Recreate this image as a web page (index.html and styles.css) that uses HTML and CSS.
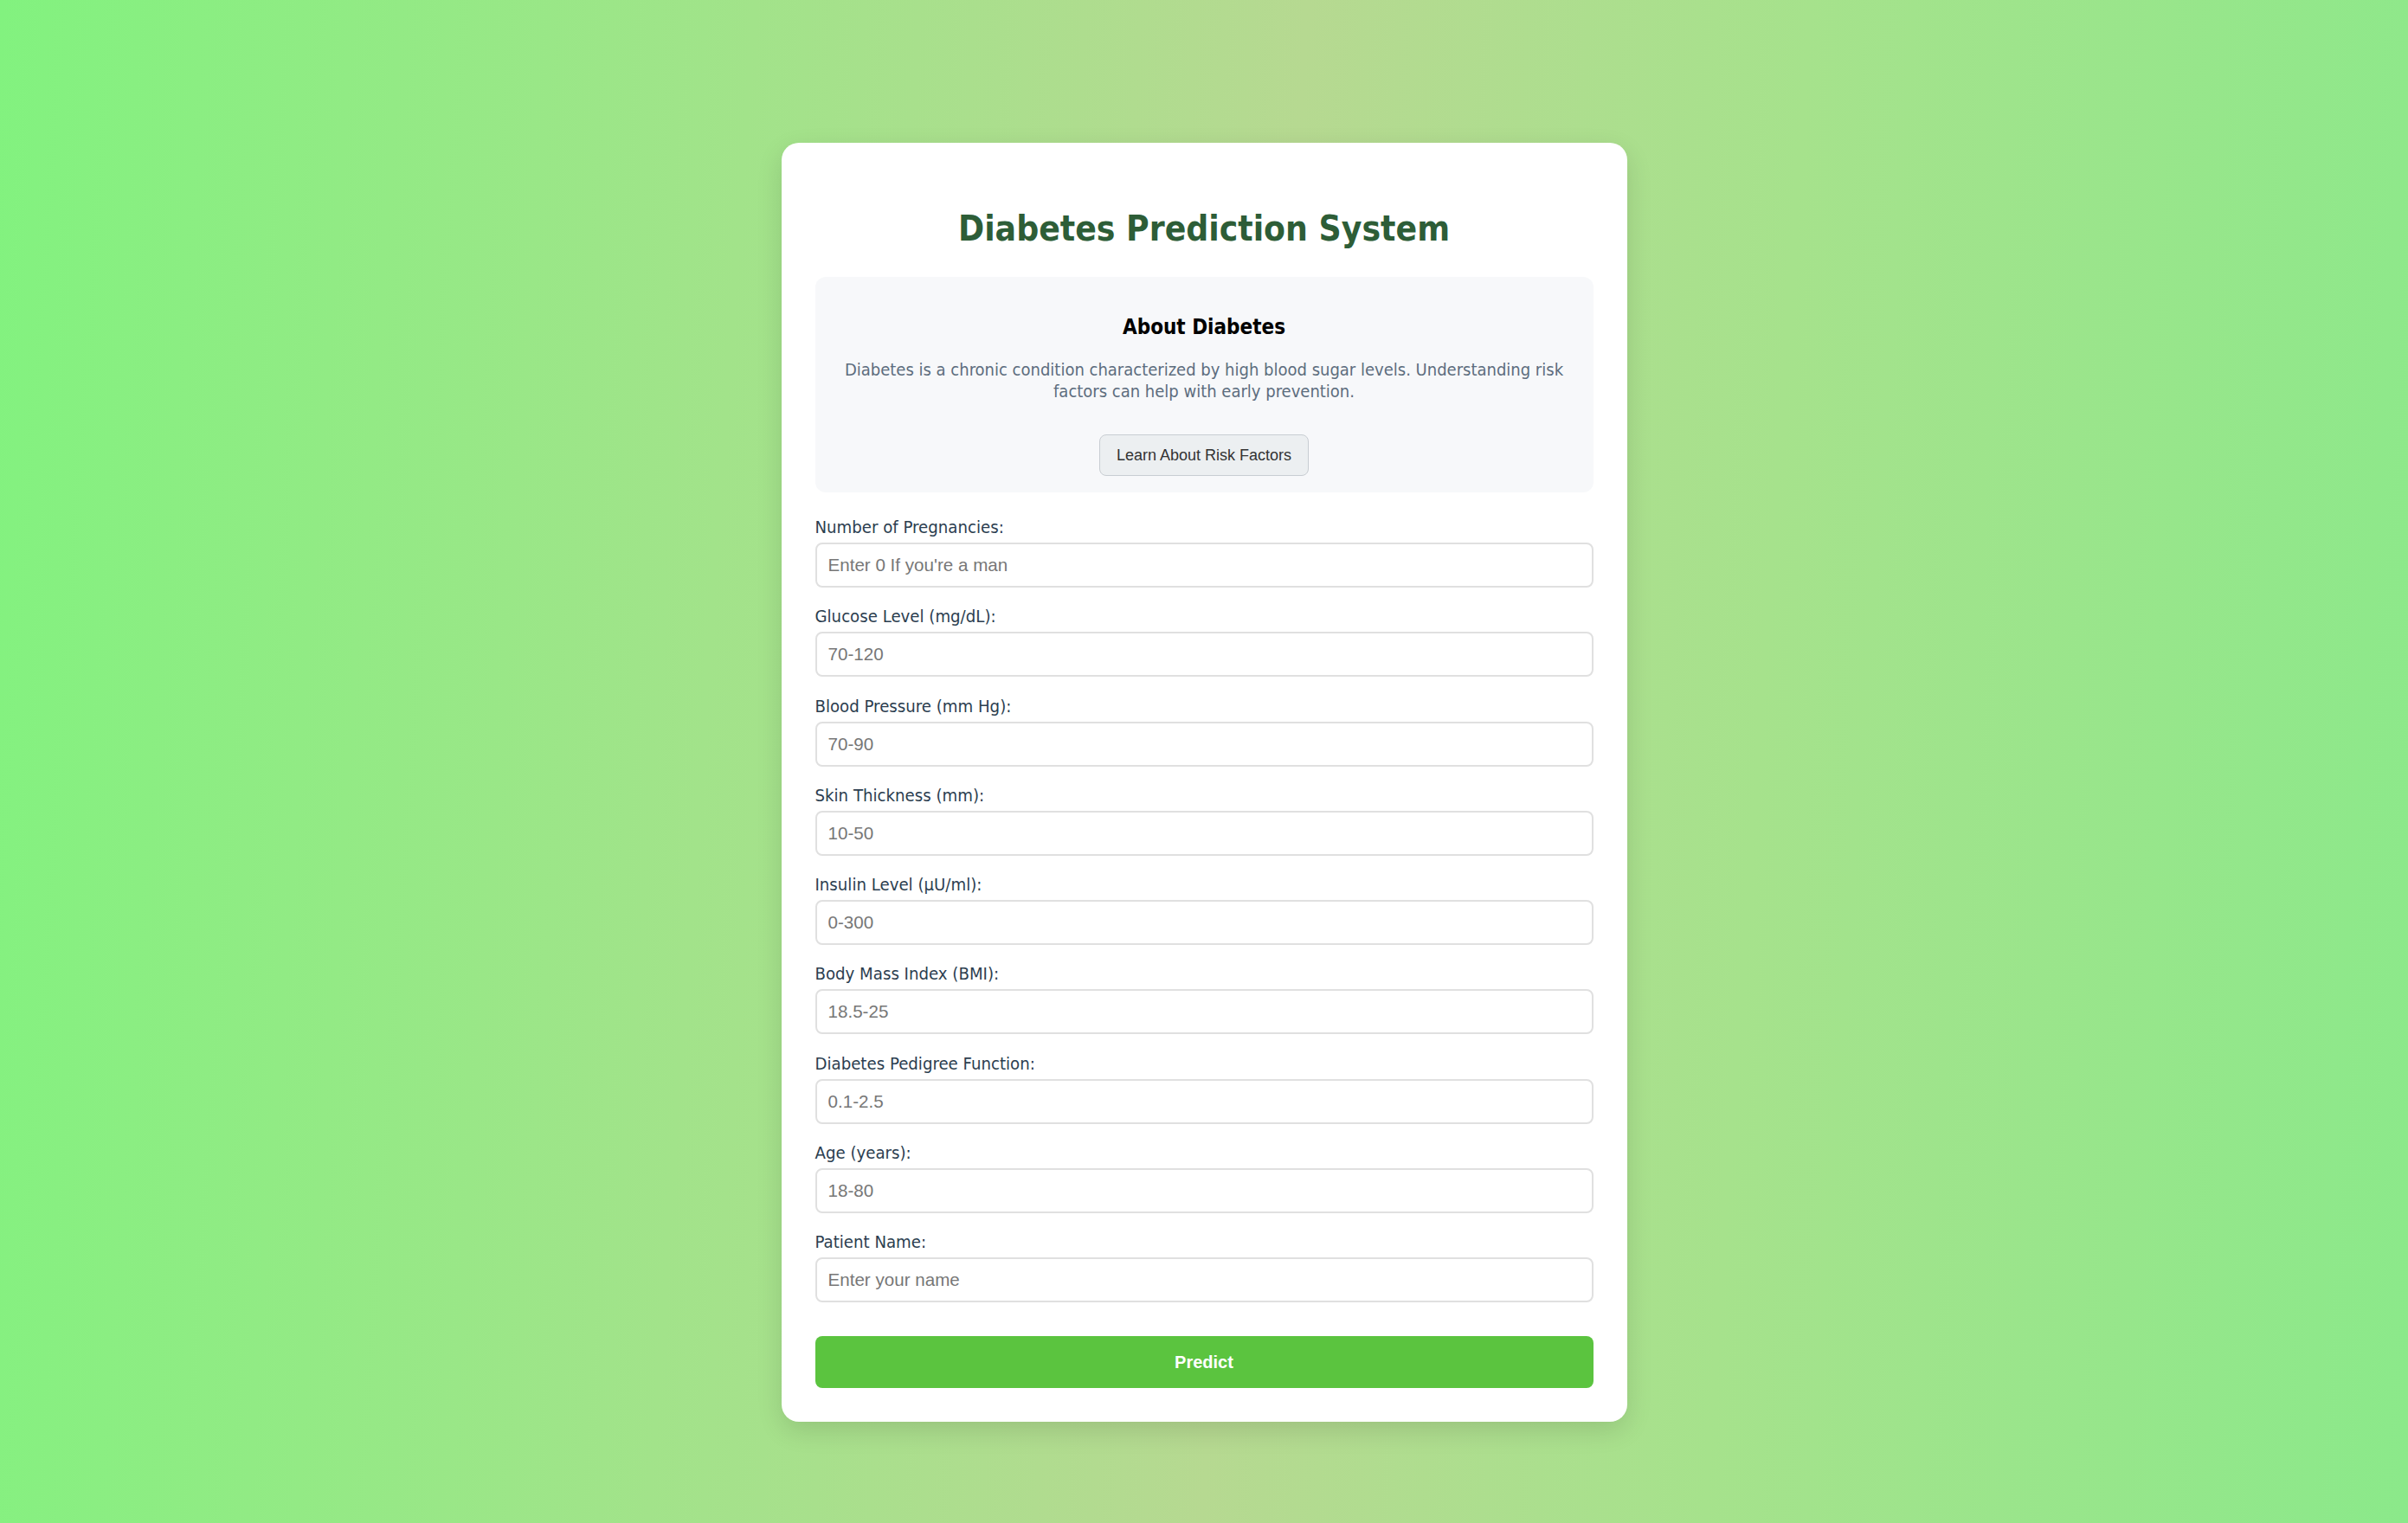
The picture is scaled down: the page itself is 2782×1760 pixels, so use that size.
FILE: index.html
```html
<!DOCTYPE html>
<html lang="en">
<head>
<meta charset="utf-8">
<title>Diabetes Prediction System</title>
<link rel="stylesheet" href="styles.css">
</head>
<body>
<div class="card">
  <h1 class="title">Diabetes Prediction System</h1>
  <div class="about">
    <h3 class="about-title">About Diabetes</h3>
    <p class="about-text">Diabetes is a chronic condition characterized by high blood sugar levels. Understanding risk factors can help with early prevention.</p>
    <button class="info-btn" type="button">Learn About Risk Factors</button>
  </div>
  <form class="form">
    <div class="group"><label class="label">Number of Pregnancies:</label><input class="input" type="text" placeholder="Enter 0 If you're a man"></div>
    <div class="group"><label class="label">Glucose Level (mg/dL):</label><input class="input" type="text" placeholder="70-120"></div>
    <div class="group"><label class="label">Blood Pressure (mm Hg):</label><input class="input" type="text" placeholder="70-90"></div>
    <div class="group"><label class="label">Skin Thickness (mm):</label><input class="input" type="text" placeholder="10-50"></div>
    <div class="group"><label class="label">Insulin Level (μU/ml):</label><input class="input" type="text" placeholder="0-300"></div>
    <div class="group"><label class="label">Body Mass Index (BMI):</label><input class="input" type="text" placeholder="18.5-25"></div>
    <div class="group"><label class="label">Diabetes Pedigree Function:</label><input class="input" type="text" placeholder="0.1-2.5"></div>
    <div class="group"><label class="label">Age (years):</label><input class="input" type="text" placeholder="18-80"></div>
    <div class="group last"><label class="label">Patient Name:</label><input class="input" type="text" placeholder="Enter your name"></div>
    <button class="predict" type="button">Predict</button>
  </form>
</div>
</body>
</html>
```

FILE: styles.css
```css
html {
  height: 100%;
}
body {
  margin: 0;
  min-height: 100%;
  box-sizing: border-box;
  padding-top: 165px;
  padding-bottom: 117px;
  background: linear-gradient(94deg, #82f27f 0%, #a2e38a 30%, #b6d991 52%, #a6e28c 72%, #8be98a 100%);
  font-family: "DejaVu Sans Condensed", "DejaVu Sans", sans-serif;
}
.card {
  width: 977px;
  box-sizing: border-box;
  margin: 0 auto;
  background: #ffffff;
  border-radius: 20px;
  padding: 39px 39px 39px 39px;
  box-shadow: 0 10px 30px rgba(0, 0, 0, 0.12);
}
.title {
  margin: 35px 0 31px;
  font-size: 40.4px;
  line-height: 50px;
  font-weight: bold;
  color: #2d5d37;
  text-align: center;
}
.about {
  background: #f7f8fa;
  border-radius: 12px;
  padding: 43px 30px 19px;
  text-align: center;
}
.about-title {
  margin: 0;
  font-size: 24px;
  line-height: 30px;
  font-weight: bold;
  color: #000;
}
.about-text {
  margin: 22px 0 37px;
  font-size: 20px;
  line-height: 25px;
  letter-spacing: 0;
  color: #5d6d7e;
}
.info-btn {
  display: inline-block;
  height: 48px;
  padding: 0 19px;
  font-family: "Liberation Sans", Arial, sans-serif;
  font-size: 18px;
  color: #333;
  background: #eceff1;
  border: 1px solid #c8cdd2;
  border-radius: 8px;
}
.form {
  margin-top: 27px;
  display: flex;
  flex-direction: column;
}
.group {
  display: flex;
  flex-direction: column;
  margin-bottom: 20.25px;
}
.group.last {
  margin-bottom: 39px;
}
.label {
  font-size: 20.2px;
  line-height: 26px;
  color: #2c3e50;
  margin-bottom: 5px;
}
.input {
  height: 52px;
  box-sizing: border-box;
  width: 100%;
  padding: 0 13px;
  border: 2px solid #e0e0e0;
  border-radius: 8px;
  font-family: "Liberation Sans", Arial, sans-serif;
  font-size: 20.6px;
  color: #333;
  background: #fff;
}
.input::placeholder {
  color: #777;
}
.predict {
  height: 60px;
  width: 100%;
  border: none;
  border-radius: 8px;
  background: #5bc43f;
  color: #fff;
  font-family: "Liberation Sans", Arial, sans-serif;
  font-weight: bold;
  font-size: 20px;
}
```
